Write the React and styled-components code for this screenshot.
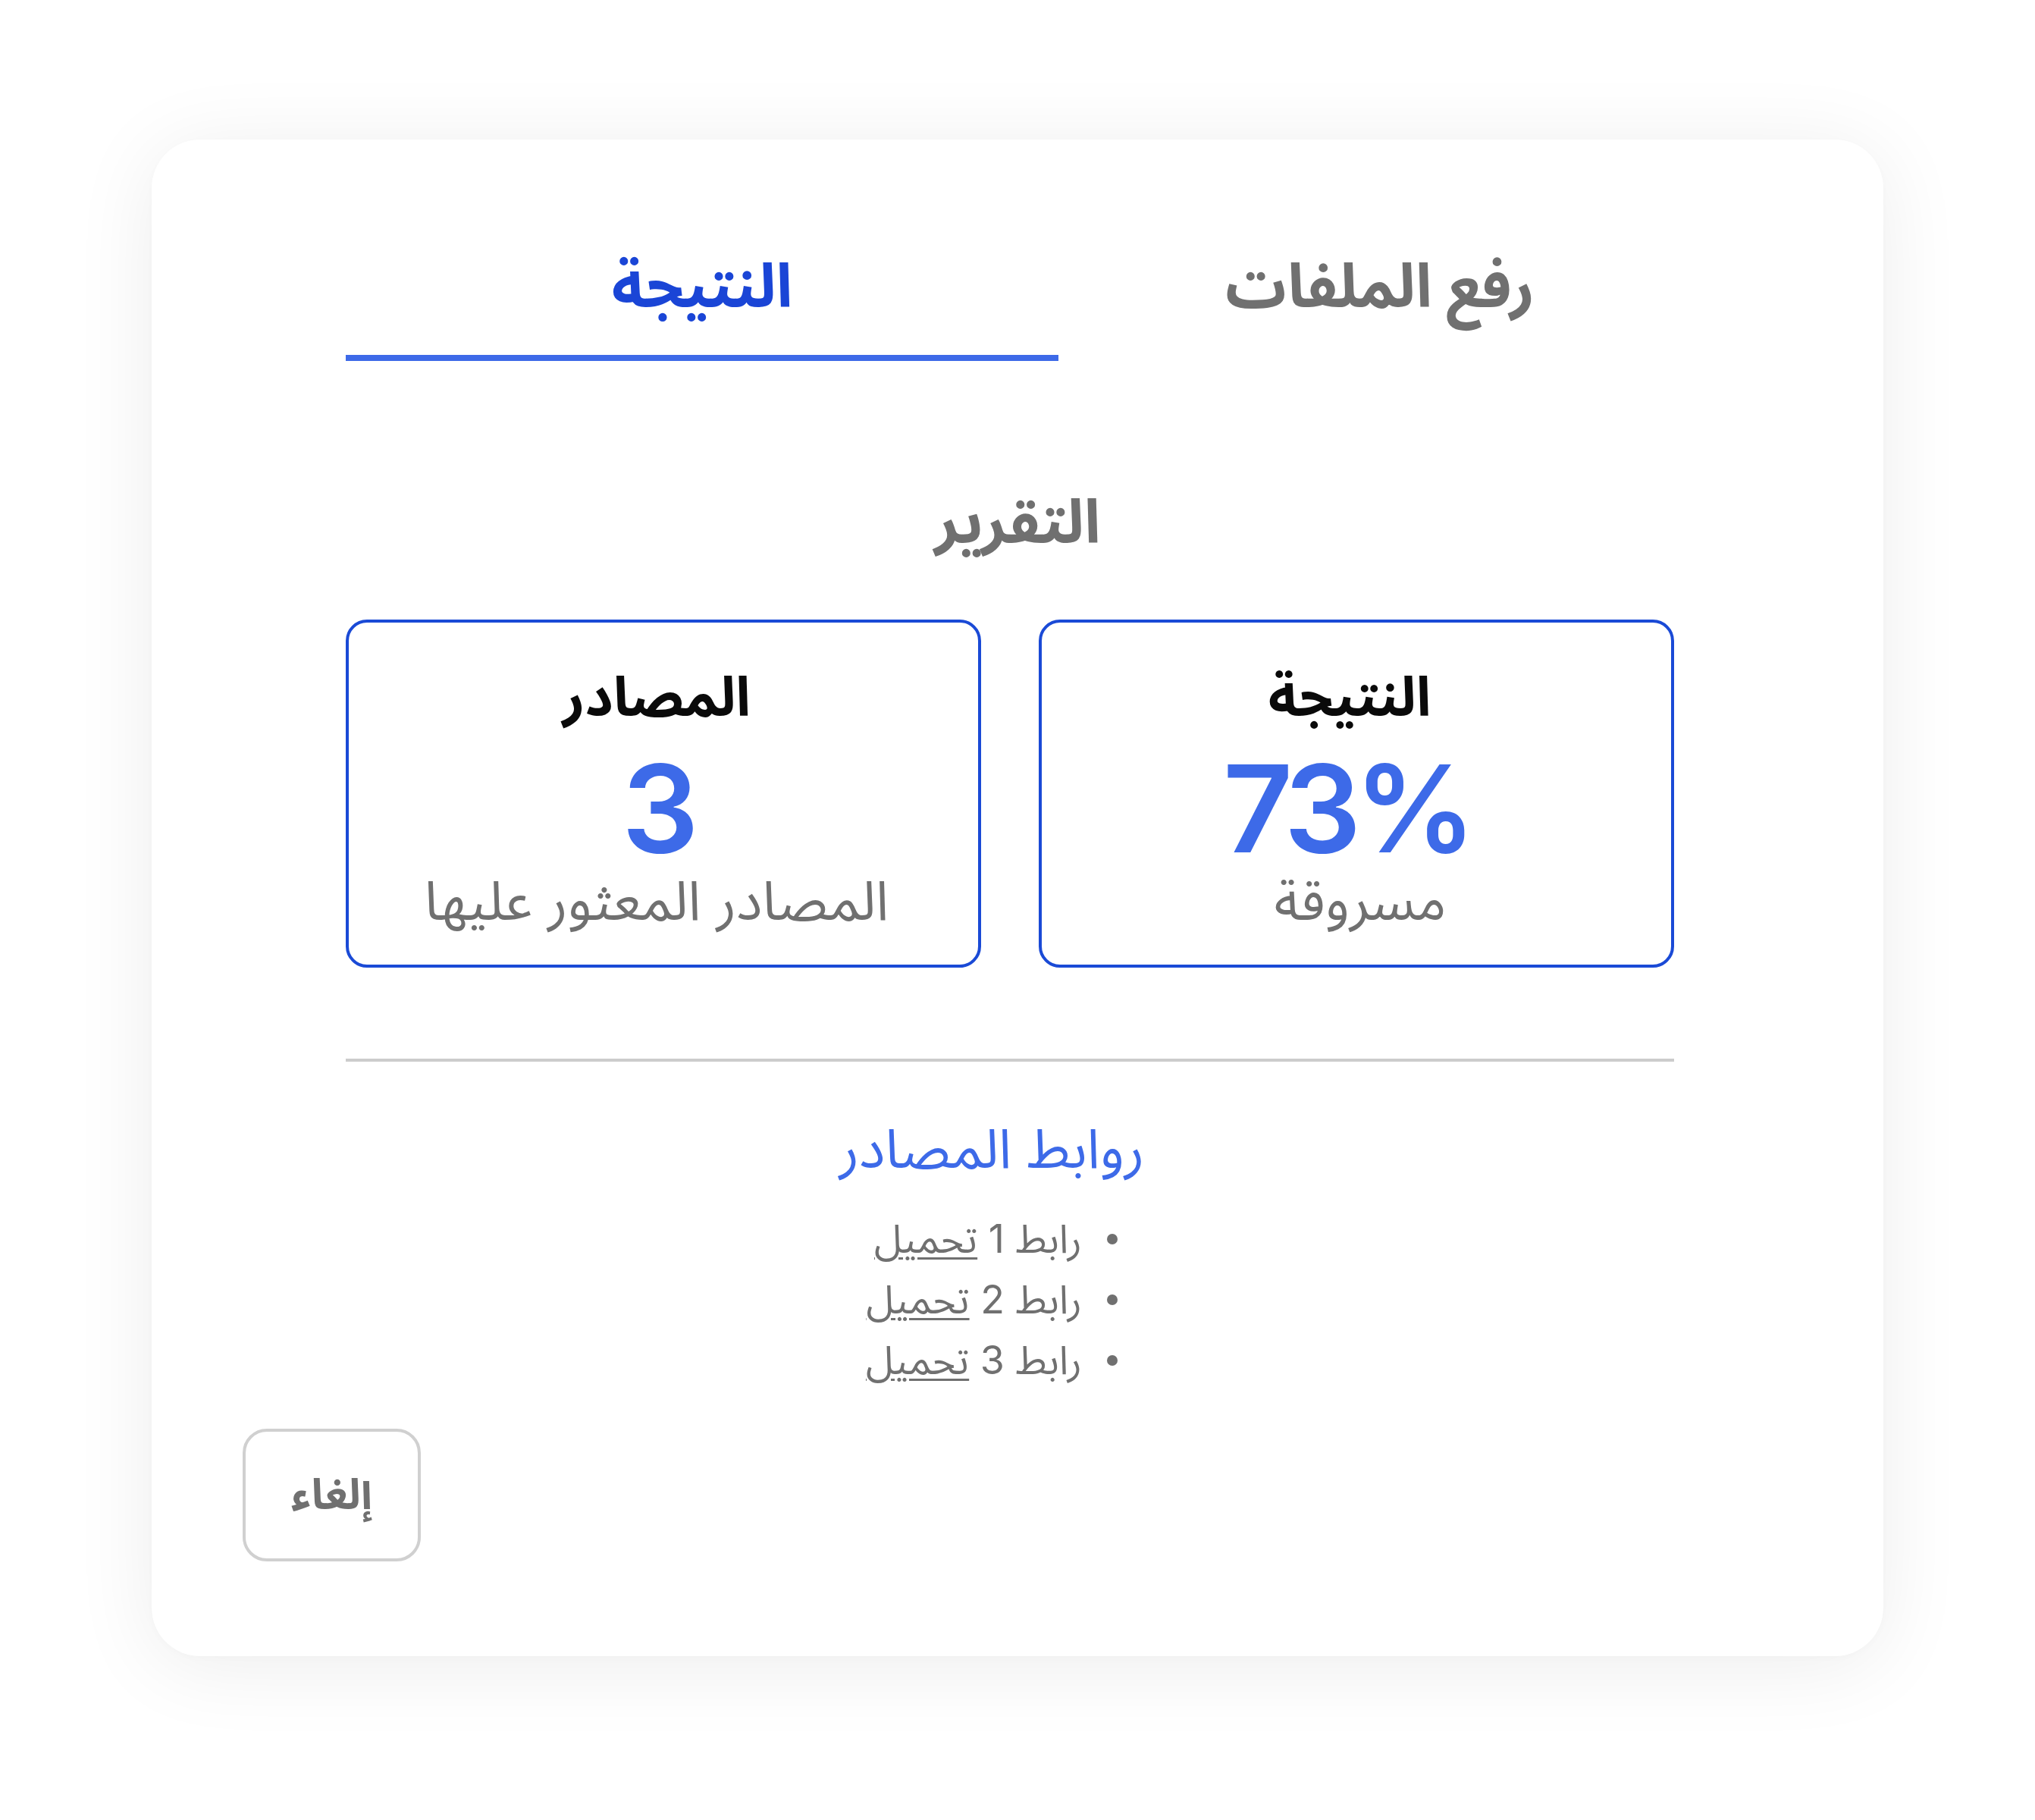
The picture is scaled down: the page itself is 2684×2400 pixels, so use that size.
import React from "react";
import styled, { createGlobalStyle } from "styled-components";

const FONT = `"Inter", "Noto Sans Arabic", sans-serif`;

const GlobalStyle = createGlobalStyle`
  html, body {
    margin: 0;
    padding: 0;
    background: #ffffff;
  }
  * { box-sizing: border-box; }
`;

const Page = styled.div`
  display: flex;
  justify-content: center;
  padding: 184px 0 216px;
  font-family: ${FONT};
`;

const Card = styled.div`
  direction: rtl;
  width: 2284px;
  background: #ffffff;
  border-radius: 64px;
  box-shadow: 0 12px 110px rgba(0, 0, 0, 0.075), 0 2px 10px rgba(0, 0, 0, 0.02);
  padding: 0 120px 125px;
`;

const Content = styled.div`
  margin: 0 156px 0 136px;
`;

const TabBar = styled.div`
  display: flex;
  gap: 36px;
  padding-top: 144px;
`;

const Tab = styled.div`
  width: ${(p) => p.$w}px;
  text-align: center;
  font-size: 80px;
  line-height: 96px;
  font-weight: 700;
  color: ${(p) => (p.$active ? "#1a45d6" : "#707070")};
  padding-bottom: 44px;
  border-bottom: 8px solid ${(p) => (p.$active ? "#3d6ae8" : "transparent")};
  cursor: pointer;
`;

const Heading = styled.h2`
  margin: 163px 0 0;
  padding-left: 20px;
  text-align: center;
  font-size: 80px;
  line-height: 96px;
  font-weight: 700;
  color: #707070;
`;

const Stats = styled.div`
  display: grid;
  grid-template-columns: 1fr 1fr;
  gap: 76px;
  margin-top: 82px;
`;

const StatBox = styled.div`
  border: 4px solid #1a4ad6;
  border-radius: 28px;
  padding: 61px 18px 49px 0;
  display: flex;
  flex-direction: column;
  align-items: center;
  text-align: center;
`;

const StatTitle = styled.div`
  font-size: 72px;
  line-height: 72px;
  font-weight: 700;
  color: #0a0a0a;
`;

const StatValue = styled.div`
  margin-top: 32px;
  padding-right: 9px;
  padding-left: ${(p) => p.$nudge || 0}px;
  font-size: 160px;
  line-height: 160px;
  font-weight: 600;
  letter-spacing: -9px;
  color: #3d6ae8;
  direction: ltr;
`;

const StatLabel = styled.div`
  margin-top: 5px;
  padding-left: ${(p) => p.$nudge || 0}px;
  font-size: 72px;
  line-height: 72px;
  color: #707070;
`;

const Divider = styled.hr`
  margin: 120px 0 0;
  border: none;
  height: 4px;
  background: #cccccc;
`;

const Links = styled.section`
  display: flex;
  flex-direction: column;
  align-items: center;
  padding-right: 48px;
`;

const LinksTitle = styled.h3`
  margin: 78px 0 0;
  font-size: 72px;
  line-height: 72px;
  font-weight: 400;
  color: #3d6ae8;
`;

const LinkList = styled.ul`
  display: flex;
  flex-direction: column;
  align-items: flex-start;
  list-style: none;
  margin: 44px 0 0;
  padding: 0;
  font-size: 52px;
  line-height: 80px;
  color: #707070;
`;

const LinkItem = styled.li`
  display: flex;
  align-items: center;
  gap: 33px;
`;

const Bullet = styled.span`
  width: 14px;
  height: 14px;
  border-radius: 50%;
  background: #707070;
  flex: none;
`;

const ItemText = styled.span``;

const Download = styled.a`
  color: #707070;
  text-decoration: underline;
  text-decoration-thickness: 3px;
  text-underline-offset: 6px;
  cursor: pointer;
`;

const Footer = styled.div`
  display: flex;
  justify-content: flex-end;
  margin-top: 50px;
`;

const CancelButton = styled.button`
  width: 235px;
  height: 175px;
  border: 4px solid #d0d0d0;
  border-radius: 32px;
  background: #ffffff;
  font-family: ${FONT};
  font-size: 56px;
  font-weight: 700;
  color: #707070;
  cursor: pointer;
`;

const links = [1, 2, 3];

export default function App() {
  return (
    <>
      <GlobalStyle />
      <Page>
        <Card>
          <Content>
            <TabBar>
              <Tab $w={776}>رفع الملفات</Tab>
              <Tab $w={940} $active>
                النتيجة
              </Tab>
            </TabBar>
            <Heading>التقرير</Heading>
            <Stats>
              <StatBox>
                <StatTitle>النتيجة</StatTitle>
                <StatValue>73%</StatValue>
                <StatLabel $nudge={28}>مسروقة</StatLabel>
              </StatBox>
              <StatBox>
                <StatTitle>المصادر</StatTitle>
                <StatValue $nudge={10}>3</StatValue>
                <StatLabel>المصادر المعثور عليها</StatLabel>
              </StatBox>
            </Stats>
            <Divider />
            <Links>
              <LinksTitle>روابط المصادر</LinksTitle>
              <LinkList>
                {links.map((n) => (
                  <LinkItem key={n}>
                    <Bullet />
                    <ItemText>
                      رابط {n} <Download>تحميل</Download>
                    </ItemText>
                  </LinkItem>
                ))}
              </LinkList>
            </Links>
          </Content>
          <Footer>
            <CancelButton>إلغاء</CancelButton>
          </Footer>
        </Card>
      </Page>
    </>
  );
}
